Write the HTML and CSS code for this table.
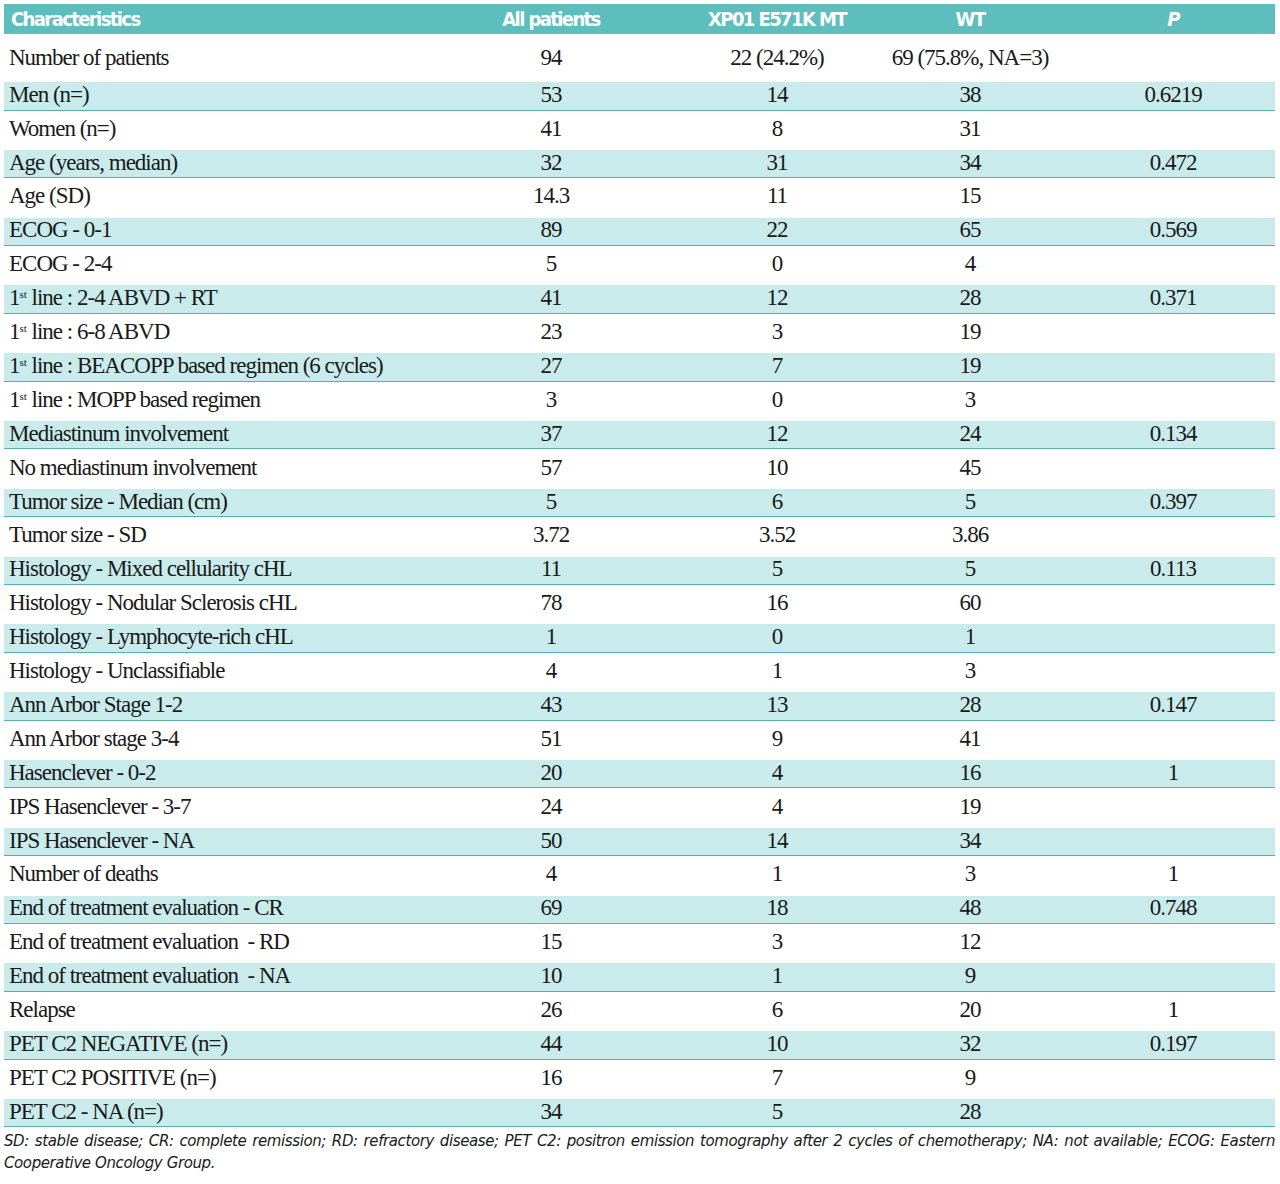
FILE: index.html
```html
<!DOCTYPE html>
<html lang="en">
<head>
<meta charset="utf-8">
<title>Patient characteristics</title>
<link rel="stylesheet" href="styles.css">
</head>
<body>
<table class="tbl">
<colgroup><col class="c1"><col class="c2"><col class="c3"><col class="c4"><col class="c5"></colgroup>
<thead>
<tr class="head"><th class="lbl">Characteristics</th><th>All patients</th><th>XP01 E571K MT</th><th>WT</th><th><i>P</i></th></tr>
</thead>
<tbody>
<tr class="w first"><td class="lbl">Number of patients</td><td>94</td><td>22 (24.2%)</td><td>69 (75.8%, NA=3)</td><td></td></tr>
<tr class="t"><td class="lbl">Men (n=)</td><td>53</td><td>14</td><td>38</td><td>0.6219</td></tr>
<tr class="w"><td class="lbl">Women (n=)</td><td>41</td><td>8</td><td>31</td><td></td></tr>
<tr class="t"><td class="lbl">Age (years, median)</td><td>32</td><td>31</td><td>34</td><td>0.472</td></tr>
<tr class="w"><td class="lbl">Age (SD)</td><td>14.3</td><td>11</td><td>15</td><td></td></tr>
<tr class="t"><td class="lbl">ECOG - 0-1</td><td>89</td><td>22</td><td>65</td><td>0.569</td></tr>
<tr class="w"><td class="lbl">ECOG - 2-4</td><td>5</td><td>0</td><td>4</td><td></td></tr>
<tr class="t"><td class="lbl">1<sup>st</sup> line : 2-4 ABVD + RT</td><td>41</td><td>12</td><td>28</td><td>0.371</td></tr>
<tr class="w"><td class="lbl">1<sup>st</sup> line : 6-8 ABVD</td><td>23</td><td>3</td><td>19</td><td></td></tr>
<tr class="t"><td class="lbl">1<sup>st</sup> line : BEACOPP based regimen (6 cycles)</td><td>27</td><td>7</td><td>19</td><td></td></tr>
<tr class="w"><td class="lbl">1<sup>st</sup> line : MOPP based regimen</td><td>3</td><td>0</td><td>3</td><td></td></tr>
<tr class="t"><td class="lbl">Mediastinum involvement</td><td>37</td><td>12</td><td>24</td><td>0.134</td></tr>
<tr class="w"><td class="lbl">No mediastinum involvement</td><td>57</td><td>10</td><td>45</td><td></td></tr>
<tr class="t"><td class="lbl">Tumor size - Median (cm)</td><td>5</td><td>6</td><td>5</td><td>0.397</td></tr>
<tr class="w"><td class="lbl">Tumor size - SD</td><td>3.72</td><td>3.52</td><td>3.86</td><td></td></tr>
<tr class="t"><td class="lbl">Histology - Mixed cellularity cHL</td><td>11</td><td>5</td><td>5</td><td>0.113</td></tr>
<tr class="w"><td class="lbl">Histology - Nodular Sclerosis cHL</td><td>78</td><td>16</td><td>60</td><td></td></tr>
<tr class="t"><td class="lbl">Histology - Lymphocyte-rich cHL</td><td>1</td><td>0</td><td>1</td><td></td></tr>
<tr class="w"><td class="lbl">Histology - Unclassifiable</td><td>4</td><td>1</td><td>3</td><td></td></tr>
<tr class="t"><td class="lbl">Ann Arbor Stage 1-2</td><td>43</td><td>13</td><td>28</td><td>0.147</td></tr>
<tr class="w"><td class="lbl">Ann Arbor stage 3-4</td><td>51</td><td>9</td><td>41</td><td></td></tr>
<tr class="t"><td class="lbl">Hasenclever - 0-2</td><td>20</td><td>4</td><td>16</td><td>1</td></tr>
<tr class="w"><td class="lbl">IPS Hasenclever - 3-7</td><td>24</td><td>4</td><td>19</td><td></td></tr>
<tr class="t"><td class="lbl">IPS Hasenclever - NA</td><td>50</td><td>14</td><td>34</td><td></td></tr>
<tr class="w"><td class="lbl">Number of deaths</td><td>4</td><td>1</td><td>3</td><td>1</td></tr>
<tr class="t"><td class="lbl">End of treatment evaluation - CR</td><td>69</td><td>18</td><td>48</td><td>0.748</td></tr>
<tr class="w"><td class="lbl">End of treatment evaluation &nbsp;- RD</td><td>15</td><td>3</td><td>12</td><td></td></tr>
<tr class="t"><td class="lbl">End of treatment evaluation &nbsp;- NA</td><td>10</td><td>1</td><td>9</td><td></td></tr>
<tr class="w"><td class="lbl">Relapse</td><td>26</td><td>6</td><td>20</td><td>1</td></tr>
<tr class="t"><td class="lbl">PET C2 NEGATIVE (n=)</td><td>44</td><td>10</td><td>32</td><td>0.197</td></tr>
<tr class="w"><td class="lbl">PET C2 POSITIVE (n=)</td><td>16</td><td>7</td><td>9</td><td></td></tr>
<tr class="t"><td class="lbl">PET C2 - NA (n=)</td><td>34</td><td>5</td><td>28</td><td></td></tr>
</tbody>
</table>
<p class="note">SD: stable disease; CR: complete remission; RD: refractory disease; PET C2: positron emission tomography after 2 cycles of chemotherapy; NA: not available; ECOG: Eastern Cooperative Oncology Group.</p>
</body>
</html>
```
FILE: styles.css
```css
html, body {
  margin: 0;
  padding: 0;
  background: #ffffff;
}
body {
  padding: 4px 5px 0 4px;
}
.tbl {
  width: 1271px;
  border-collapse: collapse;
  table-layout: fixed;
  font-family: "Liberation Serif", "Times New Roman", serif;
  font-size: 23px;
  line-height: 22px;
  letter-spacing: -1px;
  color: #1a1a1a;
}
.c1 { width: 413px; }
.c2 { width: 268px; }
.c3 { width: 184px; }
.c4 { width: 202px; }
.c5 { width: 204px; }
.tbl th, .tbl td {
  padding: 0;
  text-align: center;
  white-space: nowrap;
  vertical-align: middle;
}
.tbl .lbl {
  text-align: left;
  padding-left: 5px;
}
.head th {
  height: 30px;
  background: #5ebebe;
  color: #ffffff;
  font-family: "DejaVu Sans Condensed", "DejaVu Sans", sans-serif;
  font-stretch: condensed;
  font-weight: bold;
  font-size: 20px;
  letter-spacing: -1.6px;
  line-height: 30px;
}
.head th.lbl { padding-left: 7px; }
.w td {
  height: 39.8px;
  padding-bottom: 3px;
  box-sizing: border-box;
}
.first td {
  height: 48px;
  padding-bottom: 1px;
}
.t td {
  height: 28px;
  box-sizing: border-box;
  background: #c9ebeb;
  border-bottom: 1px solid #5aaeae;
  padding-bottom: 2px;
}
sup {
  font-size: 11px;
  line-height: 0;
  vertical-align: 7px;
  letter-spacing: 0;
}
.note {
  margin: 3px 0 0 0;
  width: 1271px;
  font-family: "DejaVu Sans", sans-serif;
  font-style: italic;
  font-size: 15px;
  line-height: 22px;
  letter-spacing: -0.4px;
  text-align: justify;
  color: #1a1a1a;
}
```
